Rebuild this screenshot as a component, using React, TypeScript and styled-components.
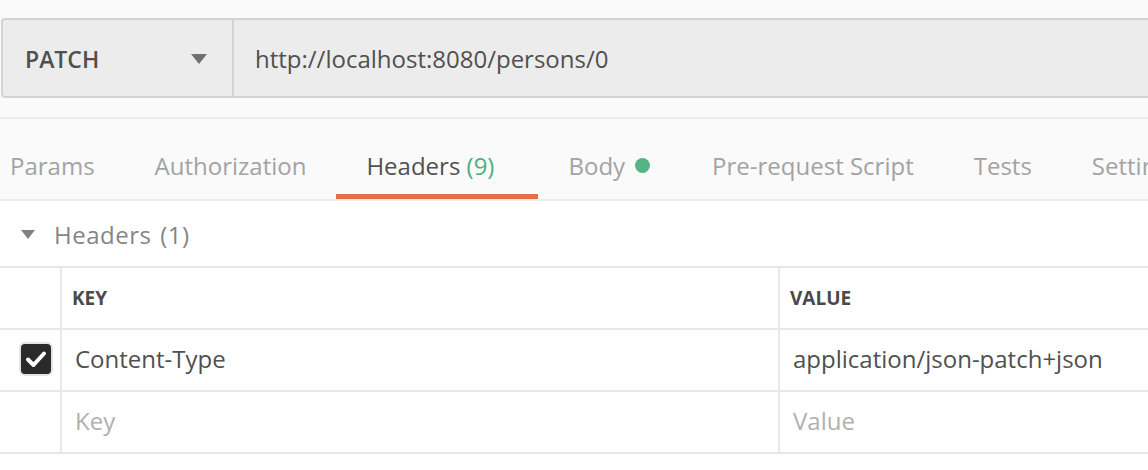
import React from "react";
import styled, { createGlobalStyle } from "styled-components";

const GlobalStyle = createGlobalStyle`
  html, body {
    margin: 0;
    padding: 0;
    background: #ffffff;
    overflow: hidden;
  }
  * {
    box-sizing: border-box;
  }
`;

const Page = styled.div`
  width: 100%;
  height: 470px;
  overflow: hidden;
  font-family: "Open Sans", "DejaVu Sans", sans-serif;
  color: #505050;
`;

const TopArea = styled.div`
  background: #fafafa;
  padding: 18px 0 19px 1px;
`;

const UrlBar = styled.div`
  display: flex;
  height: 80px;
  margin-right: -20px;
  background: #ececec;
  border: 2px solid #d4d4d4;
  border-right: none;
  border-radius: 4px 0 0 4px;
`;

const MethodSelect = styled.div`
  width: 231px;
  flex-shrink: 0;
  display: flex;
  align-items: center;
  justify-content: space-between;
  padding: 2px 25px 0 22px;
  border-right: 2px solid #d4d4d4;
  font-size: 23px;
  font-weight: 600;
  color: #4f4f4f;
`;

const Caret = styled.span<{ $size: number; $color: string }>`
  display: inline-block;
  width: 0;
  height: 0;
  border-left: ${(p) => p.$size}px solid transparent;
  border-right: ${(p) => p.$size}px solid transparent;
  border-top: ${(p) => Math.round(p.$size * 1.25)}px solid ${(p) => p.$color};
`;

const UrlText = styled.div`
  display: flex;
  align-items: center;
  padding: 1px 0 0 21px;
  font-size: 24px;
  color: #505050;
`;

const TabBar = styled.div`
  display: flex;
  height: 84px;
  background: #fafafa;
  border-top: 2px solid #ececec;
  border-bottom: 2px solid #ececec;
  margin-left: -20px;
  white-space: nowrap;
`;

const Tab = styled.div<{ $active?: boolean; $extraRight?: number }>`
  display: flex;
  align-items: center;
  gap: 10px;
  padding: 17px ${(p) => 30 + (p.$extraRight || 0)}px 0 30px;
  font-size: 24px;
  color: ${(p) => (p.$active ? "#505050" : "#a3a3a3")};
  border-bottom: 5px solid ${(p) => (p.$active ? "#e2714b" : "transparent")};
`;

const Count = styled.span`
  color: #4caf7d;
`;

const Dot = styled.span`
  width: 15px;
  height: 15px;
  border-radius: 50%;
  background: #56b384;
`;

const SectionHeader = styled.div`
  display: flex;
  align-items: center;
  gap: 19px;
  height: 67px;
  padding: 2px 0 0 21px;
  border-bottom: 2px solid #e8e8e8;
  font-size: 24px;
  letter-spacing: 0.5px;
  word-spacing: 2px;
  color: #858585;
`;

const Row = styled.div<{ $height: number }>`
  display: grid;
  grid-template-columns: 60px 718px 1fr;
  height: ${(p) => p.$height}px;
  border-bottom: 2px solid #e8e8e8;
`;

const Cell = styled.div<{ $head?: boolean; $placeholder?: boolean; $divider?: boolean }>`
  display: flex;
  align-items: center;
  padding-left: ${(p) => (p.$head ? 10 : 13)}px;
  padding-bottom: ${(p) => (p.$head ? 0 : 4)}px;
  border-left: ${(p) => (p.$divider ? "2px solid #e8e8e8" : "none")};
  font-size: ${(p) => (p.$head ? 19 : 24)}px;
  font-weight: ${(p) => (p.$head ? 700 : 400)};
  color: ${(p) => (p.$placeholder ? "#b0b0b0" : p.$head ? "#4a4a4a" : "#505050")};
  white-space: nowrap;
  overflow: hidden;
`;

const CheckCell = styled.div`
  display: flex;
  align-items: center;
  padding: 0 0 2px 19px;
`;

const CheckBox = styled.div`
  width: 34px;
  height: 34px;
  border-radius: 6px;
  background: #2a2a2a;
  border: 2px solid #e4e4e4;
  display: flex;
  align-items: center;
  justify-content: center;
`;

const tabs = ["Params", "Authorization", "Headers", "Body", "Pre-request Script", "Tests", "Settings"];

export default function App() {
  return (
    <Page>
      <GlobalStyle />
      <TopArea>
        <UrlBar>
          <MethodSelect>
            PATCH
            <Caret $size={8} $color="#707070" />
          </MethodSelect>
          <UrlText>http://localhost:8080/persons/0</UrlText>
        </UrlBar>
      </TopArea>

      <TabBar>
        {tabs.map((t) =>
          t === "Headers" ? (
            <Tab key={t} $active $extraRight={14}>
              <span>
                Headers <Count>(9)</Count>
              </span>
            </Tab>
          ) : t === "Body" ? (
            <Tab key={t} $extraRight={2}>
              Body
              <Dot />
            </Tab>
          ) : (
            <Tab key={t}>{t}</Tab>
          )
        )}
      </TabBar>

      <SectionHeader>
        <Caret $size={7} $color="#808080" />
        Headers (1)
      </SectionHeader>

      <Row $height={62}>
        <CheckCell />
        <Cell $head $divider>KEY</Cell>
        <Cell $head $divider>VALUE</Cell>
      </Row>
      <Row $height={62}>
        <CheckCell>
          <CheckBox>
            <svg width="24" height="24" viewBox="0 0 24 24">
              <polyline
                points="4,12.5 9.5,18 20,6.5"
                fill="none"
                stroke="#ffffff"
                strokeWidth="4"
                strokeLinecap="round"
                strokeLinejoin="round"
              />
            </svg>
          </CheckBox>
        </CheckCell>
        <Cell $divider>Content-Type</Cell>
        <Cell $divider>application/json-patch+json</Cell>
      </Row>
      <Row $height={62}>
        <CheckCell />
        <Cell $divider $placeholder>Key</Cell>
        <Cell $divider $placeholder>Value</Cell>
      </Row>
    </Page>
  );
}
